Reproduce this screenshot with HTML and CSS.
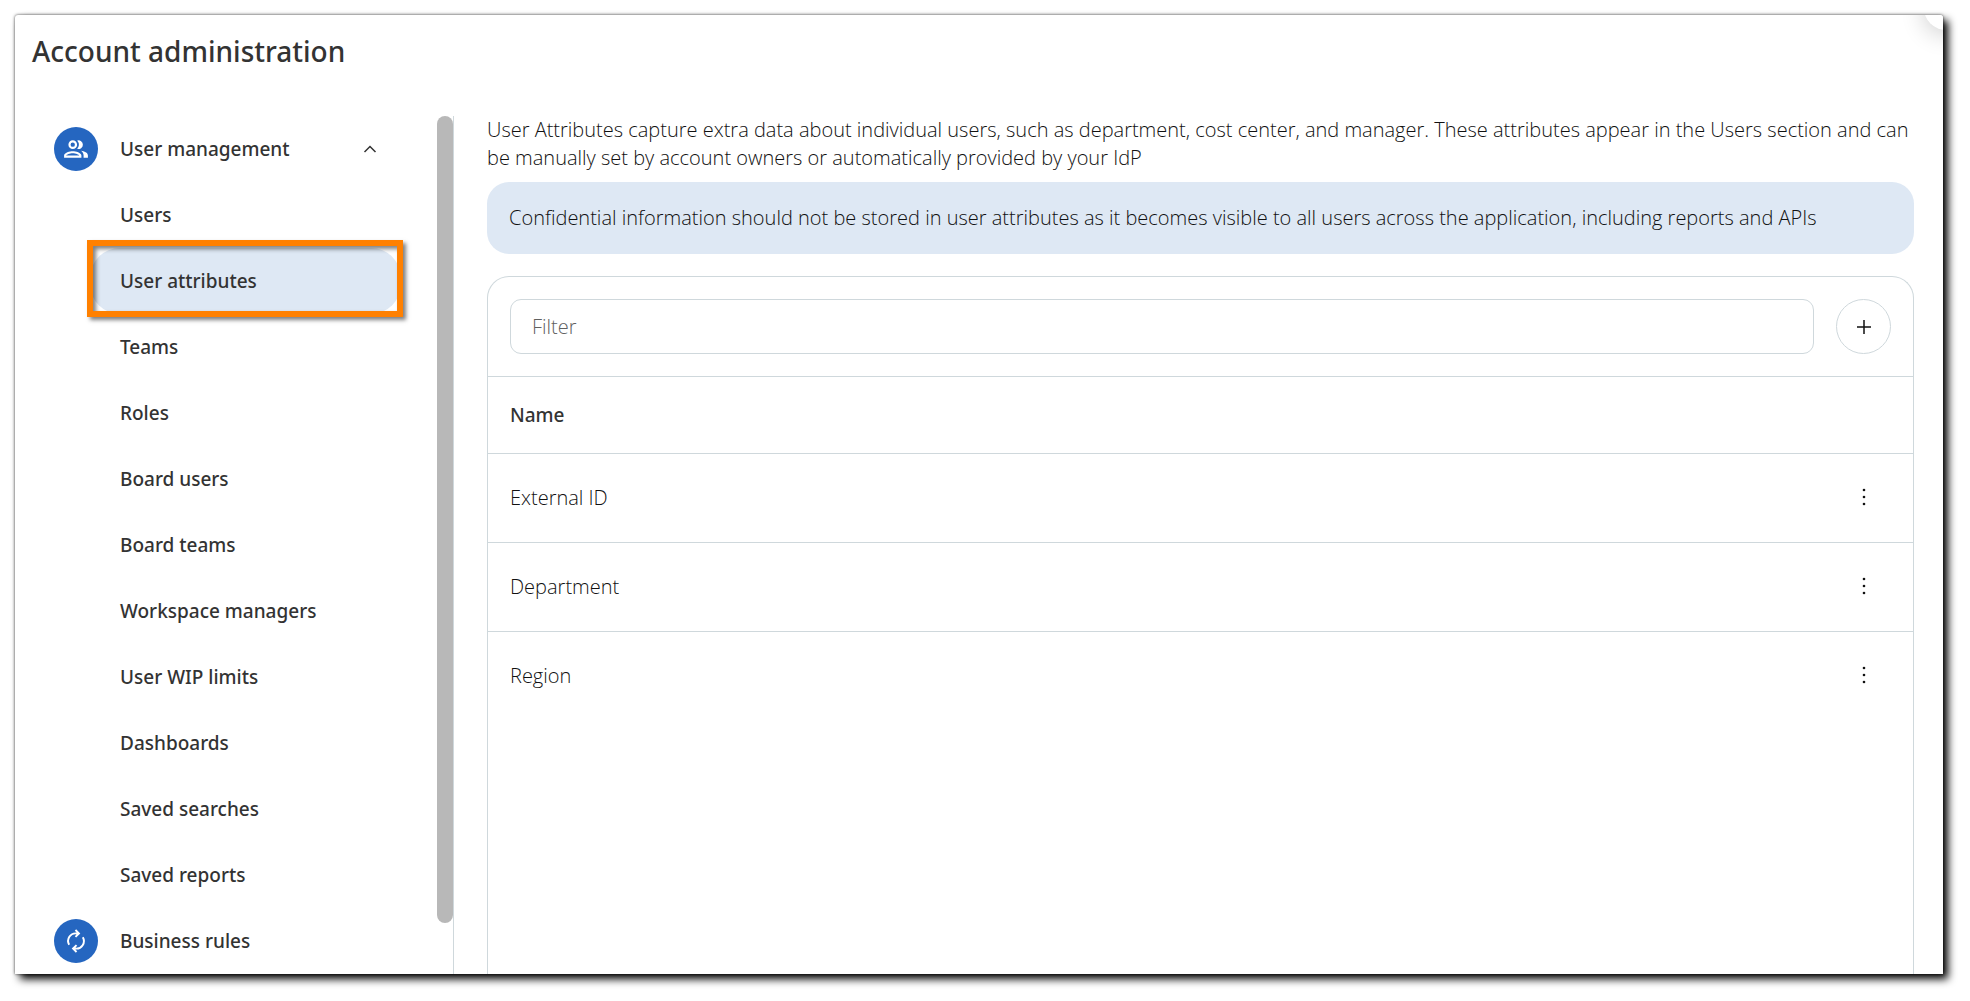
FILE: index.html
```html
<!DOCTYPE html>
<html lang="en">
<head>
    <meta charset="UTF-8">
    <meta name="viewport" content="width=device-width, initial-scale=1.0">
    <title>Account administration</title>
    <link rel="stylesheet" href="styles.css">
</head>
<body>
    <div class="window">
        <span class="corner-bubble"></span>
        <header class="header">
            <h1>Account administration</h1>
        </header>

        <div class="layout">
            <div class="sidebar">
                <nav class="menu" aria-label="Administration">
                    <button class="menu-group" type="button" aria-expanded="true">
                        <span class="menu-icon">
                            <svg width="26" height="26" viewBox="0 0 24 24" fill="currentColor" aria-hidden="true">
                                <path fill-rule="evenodd" d="M9 12a4 4 0 1 0 0-8 4 4 0 0 0 0 8zm0-6a2 2 0 1 1 0 4 2 2 0 0 1 0-4zM1 18c0-2.660 5.330-4 8-4s8 1.340 8 4v2H1zm2 0h12c-.2-.710-3.300-2-6-2s-5.800 1.290-6 2z"/>
                                <path d="M13.100 4.200A4 4 0 1 1 13.100 11.800A6 6 0 0 0 13.100 4.200zM16.700 13.600C19.500 14 23 15.300 23 18v2h-4v-2c0-1.900-.950-3.350-2.300-4.400z"/>
                            </svg>
                        </span>
                        <span class="menu-label">User management</span>
                        <svg class="chevron" width="14" height="8" viewBox="0 0 14 8" fill="none" stroke="currentColor" stroke-width="1.500" aria-hidden="true">
                            <path d="M1.500 7 7 1.500 12.500 7"/>
                        </svg>
                    </button>
                    <ul class="submenu">
                        <li><a href="#users">Users</a></li>
                        <li class="highlight"><a class="active" href="#attributes" aria-current="page">User attributes</a></li>
                        <li><a href="#teams">Teams</a></li>
                        <li><a href="#roles">Roles</a></li>
                        <li><a href="#board-users">Board users</a></li>
                        <li><a href="#board-teams">Board teams</a></li>
                        <li><a href="#workspace-managers">Workspace managers</a></li>
                        <li><a href="#wip">User WIP limits</a></li>
                        <li><a href="#dashboards">Dashboards</a></li>
                        <li><a href="#searches">Saved searches</a></li>
                        <li><a href="#reports">Saved reports</a></li>
                    </ul>
                    <button class="menu-group" type="button">
                        <span class="menu-icon">
                            <svg width="26" height="26" viewBox="0 0 24 24" fill="none" stroke="currentColor" stroke-width="1.800" aria-hidden="true">
                                <path d="M5.700 15.500A7 7 0 0 1 12.500 5H14M11.500 1.800 14.700 5 11.500 8.200"/>
                                <path d="M18.300 8.500A7 7 0 0 1 11.500 19H10M12.500 15.800 9.300 19 12.500 22.200"/>
                            </svg>
                        </span>
                        <span class="menu-label">Business rules</span>
                    </button>
                </nav>
                <div class="scrollbar"></div>
            </div>

            <main class="content">
                <p class="intro">User Attributes capture extra data about individual users, such as department, cost center, and manager. These attributes appear in the Users section and can be manually set by account owners or automatically provided by your IdP</p>
                <div class="notice">Confidential information should not be stored in user attributes as it becomes visible to all users across the application, including reports and APIs</div>

                <section class="card">
                    <div class="toolbar">
                        <input class="filter" type="text" placeholder="Filter" aria-label="Filter">
                        <button class="add-btn" type="button" aria-label="Add attribute">
                            <svg width="16" height="16" viewBox="0 0 16 16" stroke="currentColor" stroke-width="1.500" aria-hidden="true">
                                <path d="M8 1v14M1 8h14"/>
                            </svg>
                        </button>
                    </div>
                    <table class="attributes">
                        <thead>
                            <tr><th scope="col">Name</th><td></td></tr>
                        </thead>
                        <tbody>
                            <tr>
                                <td>External ID</td>
                                <td class="actions">
                                    <button class="more-btn" type="button" aria-label="External ID options">
                                        <svg width="4" height="18" viewBox="0 0 4 18" fill="currentColor" aria-hidden="true"><circle cx="2" cy="2" r="1.300"/><circle cx="2" cy="9" r="1.300"/><circle cx="2" cy="16" r="1.300"/></svg>
                                    </button>
                                </td>
                            </tr>
                            <tr>
                                <td>Department</td>
                                <td class="actions">
                                    <button class="more-btn" type="button" aria-label="Department options">
                                        <svg width="4" height="18" viewBox="0 0 4 18" fill="currentColor" aria-hidden="true"><circle cx="2" cy="2" r="1.300"/><circle cx="2" cy="9" r="1.300"/><circle cx="2" cy="16" r="1.300"/></svg>
                                    </button>
                                </td>
                            </tr>
                            <tr>
                                <td>Region</td>
                                <td class="actions">
                                    <button class="more-btn" type="button" aria-label="Region options">
                                        <svg width="4" height="18" viewBox="0 0 4 18" fill="currentColor" aria-hidden="true"><circle cx="2" cy="2" r="1.300"/><circle cx="2" cy="9" r="1.300"/><circle cx="2" cy="16" r="1.300"/></svg>
                                    </button>
                                </td>
                            </tr>
                        </tbody>
                    </table>
                </section>
            </main>
        </div>
    </div>
</body>
</html>
```

FILE: styles.css
```css
* {
    box-sizing: border-box;
}

body {
    margin: 0;
    padding: 15px 27px 27px 15px;
    height: 100vh;
    overflow: hidden;
    background: #fff;
    color: #111;
    font-family: "Open Sans", sans-serif;
    font-size: 20px;
    font-weight: 300;
    line-height: 28px;
}

button,
input {
    font: inherit;
    color: inherit;
}

button {
    padding: 0;
    border: none;
    background: none;
    cursor: pointer;
}

.window {
    position: relative;
    display: flex;
    flex-direction: column;
    height: 100%;
    overflow: hidden;
    border-radius: 3px 3px 0 0;
    background: #fff;
    box-shadow: 0 0 3px rgba(0, 0, 0, 0.7), 5px 5px 9px #000;
}

/* floating button that is mostly scrolled out of the window */
.corner-bubble {
    position: absolute;
    top: -29px;
    right: -25px;
    width: 44px;
    height: 44px;
    border-radius: 50%;
    background: #fff;
    box-shadow: 0 4px 24px rgba(0, 0, 0, 0.2);
}

.header {
    flex: none;
    height: 101px;
    padding: 16px 17px;
}

h1 {
    margin: 0;
    color: #333;
    font-family: "Noto Sans", sans-serif;
    font-size: 28px;
    font-weight: 500;
    line-height: 40px;
}

.layout {
    display: flex;
    flex: 1;
    min-height: 0;
}

/* Sidebar */
.sidebar {
    display: flex;
    flex: none;
    width: 439px;
    border-right: 1px solid #cfd8dc;
}

.menu {
    flex: 1;
    padding: 0 36px 0 39px;
    color: #333;
    font-family: "Noto Sans", sans-serif;
    font-size: 19px;
    font-weight: 500;
}

.menu-group {
    display: flex;
    align-items: center;
    width: 100%;
    height: 66px;
    padding-right: 24px;
    text-align: left;
}

.menu-icon {
    display: flex;
    align-items: center;
    justify-content: center;
    width: 44px;
    height: 44px;
    margin-right: 22px;
    border-radius: 50%;
    background: #2566c0;
    color: #fff;
}

.menu-label {
    flex: 1;
}

.submenu {
    margin: 0;
    padding: 0 0 0 36px;
    list-style: none;
}

.submenu a {
    display: flex;
    align-items: center;
    height: 66px;
    padding-left: 30px;
    border-radius: 30px;
    color: inherit;
    text-decoration: none;
}

.submenu .active {
    background: #dee8f4;
}

.highlight {
    position: relative;
}

.highlight::after {
    content: "";
    position: absolute;
    top: -8px;
    right: -2px;
    bottom: -3px;
    left: -3px;
    border: 6px solid #ff8000;
    box-shadow: 3px 3px 4px rgba(0, 0, 0, 0.5), inset 3px 3px 4px rgba(0, 0, 0, 0.5);
    pointer-events: none;
}

.scrollbar {
    width: 16px;
    height: 94%;
    border-radius: 8px;
    background: #b8b8b8;
}

/* Content */
.content {
    display: flex;
    flex: 1;
    flex-direction: column;
    min-width: 0;
    padding: 0 29px 0 33px;
}

.intro {
    margin: 0 0 10px;
}

.notice {
    padding: 22px;
    border-radius: 22px;
    background: #dee8f4;
}

.card {
    flex: 1;
    margin-top: 22px;
    border: 1px solid #cfd8dc;
    border-bottom: none;
    border-radius: 22px 22px 0 0;
}

.toolbar {
    display: flex;
    gap: 22px;
    padding: 22px;
    border-bottom: 1px solid #cfd8dc;
}

.filter {
    flex: 1;
    min-width: 0;
    height: 55px;
    padding: 0 21px;
    border: 1px solid #cfd8dc;
    border-radius: 11px;
    background: #fff;
}

.filter::placeholder {
    color: #606060;
}

.add-btn {
    display: flex;
    align-items: center;
    justify-content: center;
    width: 55px;
    height: 55px;
    border: 1px solid #cfd8dc;
    border-radius: 50%;
}

.attributes {
    width: 100%;
    border-spacing: 0;
}

.attributes th,
.attributes td {
    height: 89px;
    padding: 0 22px;
    border-bottom: 1px solid #cfd8dc;
    text-align: left;
}

.attributes thead th,
.attributes thead td {
    height: 77px;
    color: #333;
    font-family: "Noto Sans", sans-serif;
    font-size: 19px;
    font-weight: 500;
}

.attributes tbody tr:last-child td {
    border-bottom-color: transparent;
}

.attributes .actions {
    width: 99px;
    padding-bottom: 2px;
}

.more-btn {
    display: flex;
    align-items: center;
    justify-content: center;
    width: 55px;
    height: 55px;
}
```
